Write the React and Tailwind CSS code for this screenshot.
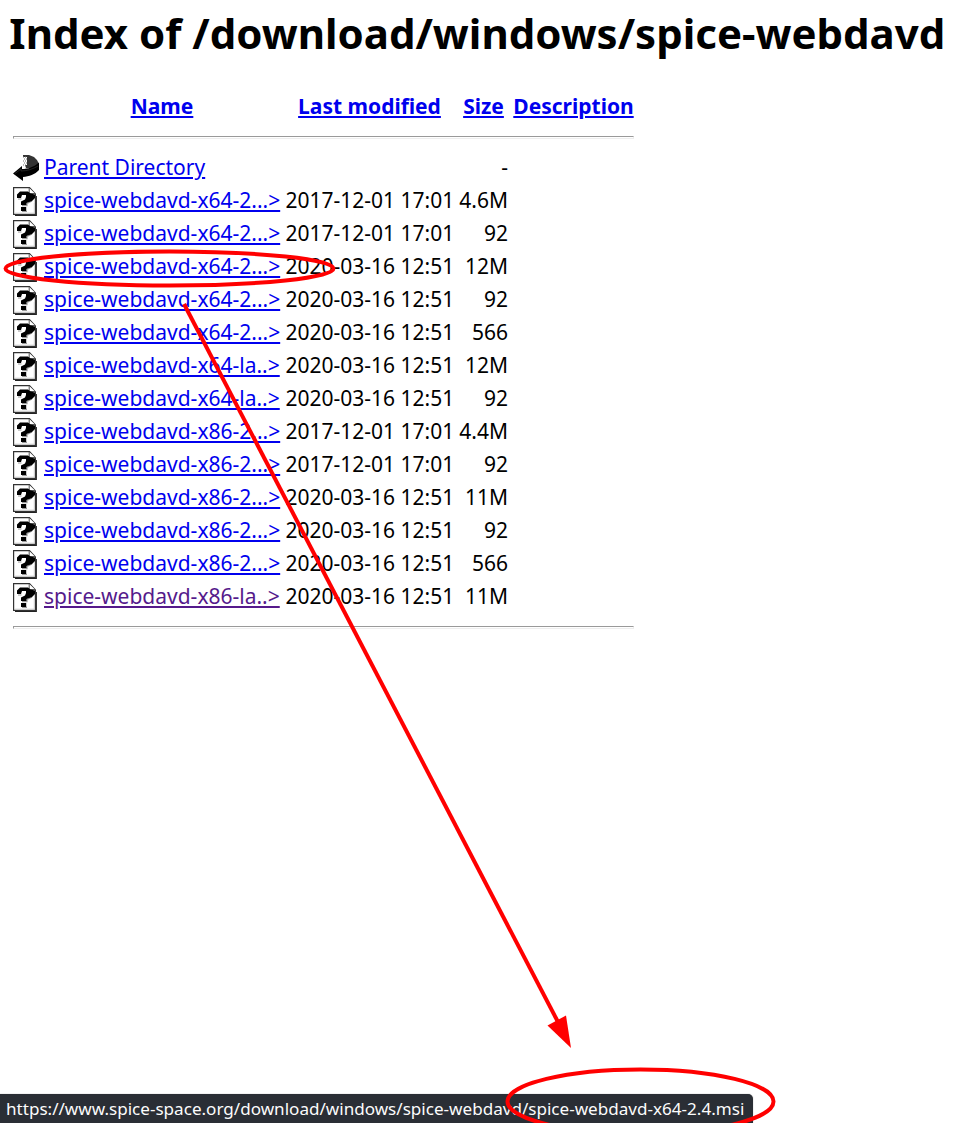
const files = [
  ['spice-webdavd-x64-2...>', '2017-12-01 17:01', '4.6M'],
  ['spice-webdavd-x64-2...>', '2017-12-01 17:01', '92'],
  ['spice-webdavd-x64-2...>', '2020-03-16 12:51', '12M'],
  ['spice-webdavd-x64-2...>', '2020-03-16 12:51', '92'],
  ['spice-webdavd-x64-2...>', '2020-03-16 12:51', '566'],
  ['spice-webdavd-x64-la..>', '2020-03-16 12:51', '12M'],
  ['spice-webdavd-x64-la..>', '2020-03-16 12:51', '92'],
  ['spice-webdavd-x86-2...>', '2017-12-01 17:01', '4.4M'],
  ['spice-webdavd-x86-2...>', '2017-12-01 17:01', '92'],
  ['spice-webdavd-x86-2...>', '2020-03-16 12:51', '11M'],
  ['spice-webdavd-x86-2...>', '2020-03-16 12:51', '92'],
  ['spice-webdavd-x86-2...>', '2020-03-16 12:51', '566'],
  ['spice-webdavd-x86-la..>', '2020-03-16 12:51', '11M', true],
];

const link = 'underline text-[#0000ee]';

function UnknownIcon() {
  return (
    <svg className="mt-[3px] block h-[30px] w-[25px]" viewBox="0 0 25 30">
      <path d="M2 28.3H23.3V9" fill="none" stroke="#222" strokeWidth="1.2" />
      <path d="M.6.7H16.5L22.4 7V27.4H.6Z" fill="#fff" stroke="#333" strokeWidth="1.2" />
      <path d="M2 26.2H21.3V16" fill="none" stroke="#ccc" strokeWidth="1" />
      <path d="M16.2 1V6.5H22" fill="#fff" stroke="#555" strokeWidth="1" />
      <path d="M5 12H8.5M9 18.6H14V16.5L19 14M9 24.4H14" fill="none" stroke="#999" strokeWidth="1.2" />
      <path d="M4 11V7.5L7 4.5H15L17.5 6.5L22 7.5V11L19 14L13.5 16V18H8V14.5L12 12.5L13 10V8H9L8 11Z" fill="#000" />
      <path d="M8 20H13.2V24H8Z" fill="#000" />
    </svg>
  );
}

function BackIcon() {
  return (
    <svg className="mt-[3px] block h-[29px] w-[27px]" viewBox="0 0 27 29">
      <path d="M10 1H16L21 3L24 6L26 10L25 14H13L12 11H14V3H10Z" fill="#333" />
      <path d="M10 3H14M11 5H14M10 7H14M11 9H14M10 11H14" stroke="#777" strokeWidth="1" strokeDasharray="1 1" />
      <path d="M0 19.5L9 12V15C15 15 21 13 26 8.5V16C22 20.5 16 22.5 10 23V27Z" fill="#000" />
      <path d="M2 19.5L8 15V17C14 17 20 15 25 12" fill="none" stroke="#333" strokeWidth=".7" />
    </svg>
  );
}

function Rule() {
  return <hr className="h-[3px] w-[621px] border border-[#eee] border-t-[#9a9a9a] border-l-[#9a9a9a]" />;
}

function Row({ children }) {
  return <div className="grid h-[33px] grid-cols-[31px_241.5px_168px_54.5px_126px] whitespace-nowrap">{children}</div>;
}

export default function App() {
  return (
    <div className="relative flex h-[1123px] w-[955px] flex-col overflow-hidden bg-white font-['Noto_Sans',sans-serif] text-[21px] leading-[32px] text-black">
      <h1 className="mt-[4px] ml-[9.3px] h-[59px] text-[42px] leading-[57px] font-bold whitespace-nowrap">
        Index of /download/windows/spice-webdavd
      </h1>
      <main className="mt-[27px] ml-[13px] w-[621px]">
        <div className="grid h-[33px] grid-cols-[31px_236px_5.5px_168px_6px_48px_5.5px_121px] text-center font-bold whitespace-nowrap">
          <span className="col-start-1 col-end-3 pl-[31px]"><a className={link}>Name</a></span>
          <span className="col-start-4"><a className={link}>Last modified</a></span>
          <span className="col-start-6"><a className={link}>Size</a></span>
          <span className="col-start-8"><a className={link}>Description</a></span>
        </div>
        <div className="mt-[13px]"><Rule /></div>
        <div className="mt-[12px]">
          <Row>
            <BackIcon />
            <a className={link}>Parent Directory</a>
            <span />
            <span className="text-right">-</span>
          </Row>
          {files.map(([name, date, size, visited], i) => (
            <Row key={i}>
              <UnknownIcon />
              <a className={visited ? 'text-[#551a8b] underline' : link}>{name}</a>
              <span>{date}</span>
              <span className="text-right">{size}</span>
            </Row>
          ))}
        </div>
        <div className="mt-[13px]"><Rule /></div>
      </main>
      <footer className="mt-auto h-[29px] w-[753px] rounded-tr-[5px] bg-[#2a2e35] pl-[6px] text-[17.08px] leading-[29px] whitespace-nowrap text-[#fcfcfc] shadow-[0_0_1px_#777]">
        https://www.spice-space.org/download/windows/spice-webdavd/spice-webdavd-x64-2.4.msi
      </footer>
      <svg className="pointer-events-none absolute inset-0 h-[1123px] w-[955px]" viewBox="0 0 955 1123" fill="none" stroke="#f00" strokeWidth="4">
        <ellipse cx="169.5" cy="268.5" rx="164" ry="17" />
        <ellipse cx="640.5" cy="1101.5" rx="133" ry="32" />
        <path d="M184 304L558 1022" />
        <path d="M571 1048L547.5 1025.5L566 1015.5Z" fill="#f00" stroke="none" />
      </svg>
    </div>
  );
}
